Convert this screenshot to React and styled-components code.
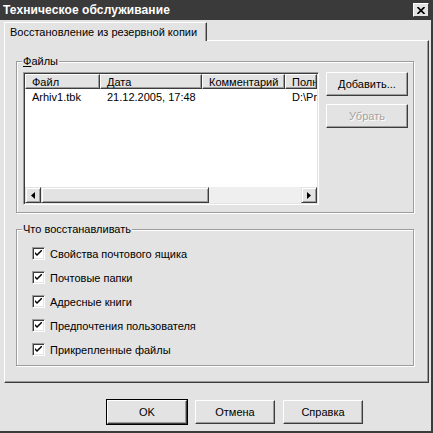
import React from 'react'
import styled, { createGlobalStyle } from 'styled-components'

const face = '#e3e3e3'
const shadow = '#9c9c9c'
const dark = '#3c3c3c'

const GlobalStyle = createGlobalStyle`
     body {
          margin: 0;
          background: ${ face };
          font-family: "Liberation Sans", Arial, sans-serif;
          font-size: 11px;
          color: #000;
     }
`

const Window = styled.div`
     width: 433px;
     height: 433px;
     box-sizing: border-box;
     background: ${ face };
     border-right: 2px solid ${ dark };
     border-bottom: 2px solid ${ dark };
     display: flex;
     flex-direction: column;
`

const TitleBar = styled.div`
     height: 20px;
     margin-right: -2px;
     background: #3a3a3a;
     display: flex;
     align-items: center;
     justify-content: space-between;
     padding: 0 4px 0 3px;
     box-sizing: border-box;

     span {
          color: #fff;
          font-weight: bold;
          font-size: 12px;
          letter-spacing: 0.1px;
     }
`

const CloseButton = styled.div`
     width: 16px;
     height: 14px;
     box-sizing: border-box;
     background: ${ face };
     border: 1px solid;
     border-color: #fff ${ dark } ${ dark } #fff;
     display: flex;
     align-items: center;
     justify-content: center;
`

const Body = styled.div`
     padding: 2px 0 0 4px;
     display: flex;
     flex-direction: column;
`

const TabStrip = styled.div`
     display: flex;
     height: 18px;
     position: relative;
     z-index: 1;
`

const Tab = styled.div`
     width: 203px;
     height: 19px;
     box-sizing: border-box;
     border-top: 1px solid #fff;
     border-left: 1px solid #fff;
     border-right: 1px solid ${ dark };
     box-shadow: inset -1px 0 0 ${ shadow };
     border-radius: 1px 1px 0 0;
     background: ${ face };
     padding: 3px 0 0 5px;
     white-space: nowrap;
`

const Panel = styled.div`
     width: 425px;
     height: 343px;
     box-sizing: border-box;
     border: 1px solid;
     border-color: #fff ${ dark } ${ dark } #fff;
     box-shadow: inset -1px -1px 0 ${ shadow };
     padding: 20px 14px 0 11px;
     display: flex;
     flex-direction: column;
`

const Group = styled.div`
     position: relative;
     width: 398px;
     height: ${ p => p.h }px;
     margin-top: ${ p => p.mt || 0 }px;
     box-sizing: border-box;
     border: 1px solid ${ shadow };
     box-shadow: inset 1px 1px 0 #fff, 1px 1px 0 #fff;
`

const GroupLabel = styled.div`
     position: absolute;
     top: -7px;
     left: 5px;
     padding: 0 1px 0 1px;
     background: ${ face };
     line-height: 13px;

     u {
          text-decoration: underline;
          text-underline-offset: 1px;
     }
`

const FilesRow = styled.div`
     display: flex;
     gap: 7px;
     padding: 10px 0 0 6px;
`

const ListView = styled.div`
     width: 296px;
     height: 133px;
     box-sizing: border-box;
     background: #fff;
     border: 1px solid;
     border-color: ${ shadow } #fff #fff ${ shadow };
     box-shadow: inset 1px 1px 0 ${ dark }, inset -1px -1px 0 ${ face };
     padding: 1px;
     display: flex;
     flex-direction: column;
     overflow: hidden;
`

const HeaderRow = styled.div`
     display: flex;
     height: 15px;
     flex: none;
`

const HeaderCell = styled.div`
     width: ${ p => p.w }px;
     flex: none;
     box-sizing: border-box;
     background: ${ face };
     border: 1px solid;
     border-color: #fff ${ dark } ${ dark } #fff;
     box-shadow: inset -1px -1px 0 ${ shadow };
     padding: 1px 0 0 6px;
     white-space: nowrap;
     overflow: hidden;
     line-height: 12px;
`

const Rows = styled.div`
     flex: 1;
`

const Row = styled.div`
     display: flex;
     height: 15px;
     align-items: center;
`

const Cell = styled.div`
     width: ${ p => p.w }px;
     flex: none;
     box-sizing: border-box;
     padding-left: 7px;
     white-space: nowrap;
     overflow: hidden;
`

const ScrollBar = styled.div`
     height: 16px;
     flex: none;
     display: flex;
     background-color: #efefef;
`

const ScrollButton = styled.div`
     width: ${ p => p.w }px;
     flex: none;
     box-sizing: border-box;
     background: ${ face };
     border: 1px solid;
     border-color: ${ face } ${ dark } ${ dark } ${ face };
     box-shadow: inset 1px 1px 0 #fff, inset -1px -1px 0 ${ shadow };
     display: flex;
     align-items: center;
     justify-content: center;
`

const Track = styled.div`
     flex: 1;
`

const ButtonColumn = styled.div`
     display: flex;
     flex-direction: column;
     gap: 8px;
`

const Button = styled.div`
     width: ${ p => p.w || 82 }px;
     height: ${ p => p.h || 24 }px;
     box-sizing: border-box;
     background: ${ face };
     border: 1px solid;
     border-color: #fff ${ dark } ${ dark } #fff;
     box-shadow: inset -1px -1px 0 ${ shadow };
     display: flex;
     align-items: center;
     justify-content: center;
     white-space: nowrap;
     color: ${ p => p.disabled ? '#a3a3a3' : '#000' };
     text-shadow: ${ p => p.disabled ? '1px 1px 0 #fff' : 'none' };
     outline: ${ p => p.default ? '1px solid #000' : 'none' };
     outline-offset: 0;
`

const CheckList = styled.div`
     display: flex;
     flex-direction: column;
     gap: 11px;
     padding: 17px 0 0 15px;
`

const CheckRow = styled.label`
     display: flex;
     align-items: center;
     gap: 5px;
     height: 13px;
`

const CheckBox = styled.span`
     width: 13px;
     height: 13px;
     box-sizing: border-box;
     background: #fff;
     border: 1px solid;
     border-color: ${ shadow } #fff #fff ${ shadow };
     box-shadow: inset 1px 1px 0 ${ dark }, inset -1px -1px 0 ${ face };
     display: flex;
     align-items: center;
     justify-content: center;
`

const Footer = styled.div`
     display: flex;
     gap: 8px;
     padding: 17px 0 0 103px;
`

const Check = () => (
     <svg width="7" height="7" viewBox="0 0 7 7">
          <path d="M0 2 L0 4 L2 6 L7 1 L7 -1 L2 4 Z" fill="#000" />
     </svg>
)

const Arrow = ({ dir }) => (
     <svg width="4" height="7" viewBox="0 0 4 7">
          {dir === 'left'
               ? <path d="M4 0 L0 3.5 L4 7 Z" fill="#000" />
               : <path d="M0 0 L4 3.5 L0 7 Z" fill="#000" />}
     </svg>
)

const columns = [
     { title: 'Файл', w: 75 },
     { title: 'Дата', w: 102 },
     { title: 'Комментарий', w: 83 },
     { title: 'Полный путь', w: 32 },
]

const files = [
     ['Arhiv1.tbk', '21.12.2005, 17:48', '', 'D:\\Program Files\\Arhiv1.tbk'],
]

const options = [
     'Свойства почтового ящика',
     'Почтовые папки',
     'Адресные книги',
     'Предпочтения пользователя',
     'Прикрепленные файлы',
]

const App = () => {
     return (
          <Window>
               <GlobalStyle />
               <TitleBar>
                    <span>Техническое обслуживание</span>
                    <CloseButton>
                         <svg width="8" height="7" viewBox="0 0 8 7">
                              <path d="M0.5 0 L7.5 7 M7.5 0 L0.5 7" stroke="#000" strokeWidth="1.6" />
                         </svg>
                    </CloseButton>
               </TitleBar>
               <Body>
                    <TabStrip>
                         <Tab>Восстановление из резервной копии</Tab>
                    </TabStrip>
                    <Panel>
                         <Group h={152}>
                              <GroupLabel><u>Ф</u>айлы</GroupLabel>
                              <FilesRow>
                                   <ListView>
                                        <HeaderRow>
                                             {columns.map(c => <HeaderCell key={c.title} w={c.w}>{c.title}</HeaderCell>)}
                                        </HeaderRow>
                                        <Rows>
                                             {files.map((f, i) => (
                                                  <Row key={i}>
                                                       {f.map((v, j) => <Cell key={j} w={columns[j].w}>{v}</Cell>)}
                                                  </Row>
                                             ))}
                                        </Rows>
                                        <ScrollBar>
                                             <ScrollButton w={16}><Arrow dir="left" /></ScrollButton>
                                             <ScrollButton w={168} />
                                             <Track />
                                             <ScrollButton w={16}><Arrow dir="right" /></ScrollButton>
                                        </ScrollBar>
                                   </ListView>
                                   <ButtonColumn>
                                        <Button>Добавить...</Button>
                                        <Button disabled>Убрать</Button>
                                   </ButtonColumn>
                              </FilesRow>
                         </Group>
                         <Group h={137} mt={16}>
                              <GroupLabel>Что восстанавливать</GroupLabel>
                              <CheckList>
                                   {options.map(o => (
                                        <CheckRow key={o}>
                                             <CheckBox><Check /></CheckBox>
                                             {o}
                                        </CheckRow>
                                   ))}
                              </CheckList>
                         </Group>
                    </Panel>
                    <Footer>
                         <Button w={80} default>OK</Button>
                         <Button w={80}>Отмена</Button>
                         <Button w={80}>Справка</Button>
                    </Footer>
               </Body>
          </Window>
     )
}

export default App
